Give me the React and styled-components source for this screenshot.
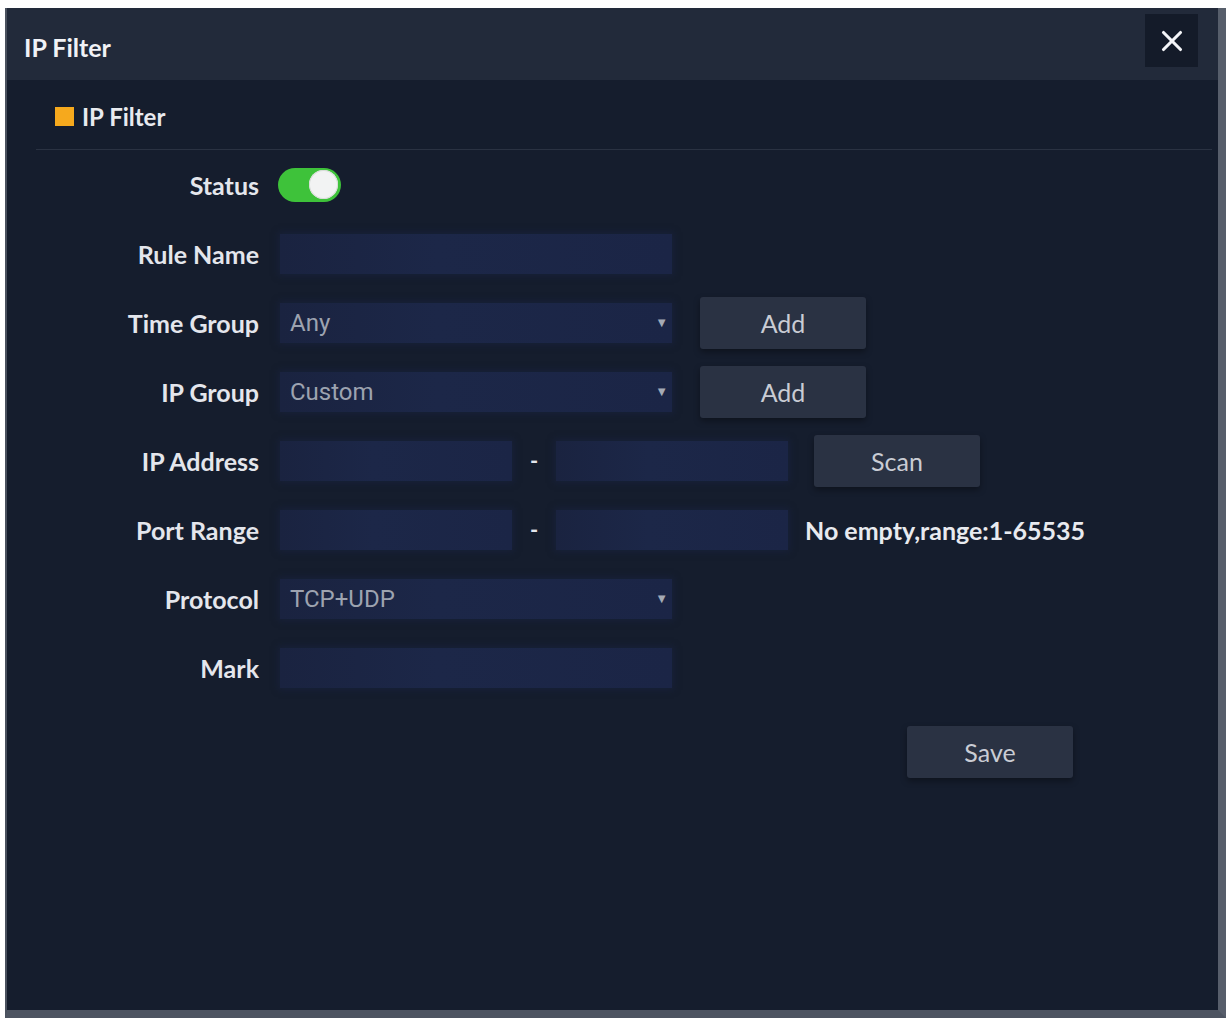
import React, { useState } from "react";
import styled, { createGlobalStyle } from "styled-components";
import { X } from "lucide-react";

const GlobalStyle = createGlobalStyle`
  html, body {
    margin: 0;
    padding: 0;
    background: #ffffff;
  }
  body {
    font-family: Lato, "Open Sans", sans-serif;
  }
`;

export default function App() {
  const [status, setStatus] = useState(true);

  return (
    <Page>
      <GlobalStyle />
      <Dialog>
        <Header>
          <h1>IP Filter</h1>
          <CloseButton aria-label="close">
            <X size={34} strokeWidth={2.2} />
          </CloseButton>
        </Header>
        <Body>
          <Section>
            <SectionTitle>
              <span className="mark" />
              IP Filter
            </SectionTitle>
          </Section>
          <Form>
            <Row>
              <Label>Status</Label>
              <Toggle $on={status} onClick={() => setStatus(!status)}>
                <span />
              </Toggle>
            </Row>
            <Row>
              <Label>Rule Name</Label>
              <Field $width={392} />
            </Row>
            <Row>
              <Label>Time Group</Label>
              <Select $width={392}>
                <span>Any</span>
                <Arrow>▼</Arrow>
              </Select>
              <Button $ml={28}>Add</Button>
            </Row>
            <Row>
              <Label>IP Group</Label>
              <Select $width={392}>
                <span>Custom</span>
                <Arrow>▼</Arrow>
              </Select>
              <Button $ml={28}>Add</Button>
            </Row>
            <Row>
              <Label>IP Address</Label>
              <Field $width={232} />
              <Dash>-</Dash>
              <Field $width={232} />
              <Button $ml={26}>Scan</Button>
            </Row>
            <Row>
              <Label>Port Range</Label>
              <Field $width={232} />
              <Dash>-</Dash>
              <Field $width={232} />
              <Hint>No empty,range:1-65535</Hint>
            </Row>
            <Row>
              <Label>Protocol</Label>
              <Select $width={392}>
                <span>TCP+UDP</span>
                <Arrow>▼</Arrow>
              </Select>
            </Row>
            <Row>
              <Label>Mark</Label>
              <Field $width={392} />
            </Row>
          </Form>
          <Actions>
            <Button>Save</Button>
          </Actions>
        </Body>
      </Dialog>
    </Page>
  );
}

const Page = styled.div`
  width: 1226px;
  height: 1018px;
  padding: 8px 0 0 5px;
  box-sizing: border-box;
  overflow: hidden;
`;

const Dialog = styled.div`
  width: 1221px;
  height: 1010px;
  box-sizing: border-box;
  background: #151d2d;
  border-left: 2px solid #4a515e;
  border-right: 8px solid #575e6b;
  border-bottom: 8px solid #4d5461;
  display: flex;
  flex-direction: column;
`;

const Header = styled.div`
  height: 72px;
  flex-shrink: 0;
  background: #222a3a;
  display: flex;
  align-items: center;
  justify-content: space-between;
  padding: 0 20px 0 17px;

  h1 {
    margin: 0;
    font-family: Lato, sans-serif;
    font-weight: 700;
    font-size: 25px;
    color: #f1f2f6;
    padding-top: 6px;
  }
`;

const CloseButton = styled.button`
  width: 53px;
  height: 53px;
  margin-top: -7px;
  border: none;
  background: #141b29;
  color: #f4f5f8;
  display: flex;
  align-items: center;
  justify-content: center;
  padding: 0;
  cursor: pointer;
`;

const Body = styled.div`
  flex: 1;
  display: flex;
  flex-direction: column;
`;

const Section = styled.div`
  margin: 0 6px 0 29px;
  height: 69px;
  border-bottom: 1px solid #2a3242;
  display: flex;
  align-items: center;
  padding-left: 19px;
`;

const SectionTitle = styled.div`
  display: flex;
  align-items: center;
  gap: 8px;
  font-family: Lato, sans-serif;
  font-weight: 700;
  font-size: 24px;
  color: #e8eaef;
  padding-top: 3px;

  .mark {
    width: 19px;
    height: 19px;
    background: #f6a91d;
  }
`;

const Form = styled.div`
  display: flex;
  flex-direction: column;
`;

const Row = styled.div`
  height: 69px;
  display: flex;
  align-items: center;
`;

const Label = styled.div`
  width: 252px;
  flex-shrink: 0;
  margin-right: 21px;
  text-align: right;
  font-family: Lato, sans-serif;
  font-weight: 700;
  font-size: 25px;
  color: #e4e6ec;
`;

const Toggle = styled.div`
  width: 63px;
  height: 34px;
  border-radius: 17px;
  background: ${(p) => (p.$on ? "#3ec23a" : "#4a5263")};
  display: flex;
  align-items: center;
  justify-content: ${(p) => (p.$on ? "flex-end" : "flex-start")};
  padding: 0 3px;
  box-sizing: border-box;
  margin-left: -2px;
  cursor: pointer;

  span {
    width: 29px;
    height: 29px;
    border-radius: 50%;
    background: #f2f3f3;
    box-shadow: inset 0 0 0 1px #d8dcd8;
  }
`;

const Field = styled.div`
  width: ${(p) => p.$width}px;
  height: 40px;
  background: linear-gradient(90deg, #1a2340 0%, #1c2748 40%, #1b2546 100%);
  box-shadow: 0 0 6px 2px rgba(26, 36, 68, 0.5);
`;

const Select = styled.div`
  width: ${(p) => p.$width}px;
  height: 40px;
  background: linear-gradient(90deg, #1a2340 0%, #1c2748 40%, #1b2546 100%);
  box-shadow: 0 0 6px 2px rgba(26, 36, 68, 0.5);
  display: flex;
  align-items: center;
  justify-content: space-between;
  padding: 0 4px 0 10px;
  box-sizing: border-box;
  font-family: Roboto, Arial, sans-serif;
  font-size: 24px;
  color: #9da3b0;
`;

const Arrow = styled.span`
  font-size: 13px;
  color: #a5aab5;
`;

const Dash = styled.span`
  width: 44px;
  text-align: center;
  font-family: Lato, sans-serif;
  font-size: 22px;
  font-weight: 700;
  color: #e4e6ec;
`;

const Button = styled.button`
  width: 166px;
  height: 52px;
  margin-left: ${(p) => p.$ml || 0}px;
  border: none;
  border-radius: 3px;
  background: #2a3243;
  box-shadow: 0 3px 6px rgba(0, 0, 0, 0.35);
  font-family: Lato, sans-serif;
  font-size: 25px;
  color: #c9ccd4;
  cursor: pointer;
`;

const Hint = styled.span`
  margin-left: 17px;
  font-family: Lato, sans-serif;
  font-weight: 700;
  font-size: 25px;
  color: #e8eaef;
`;

const Actions = styled.div`
  display: flex;
  padding-left: 900px;
  margin-top: 24px;
`;
